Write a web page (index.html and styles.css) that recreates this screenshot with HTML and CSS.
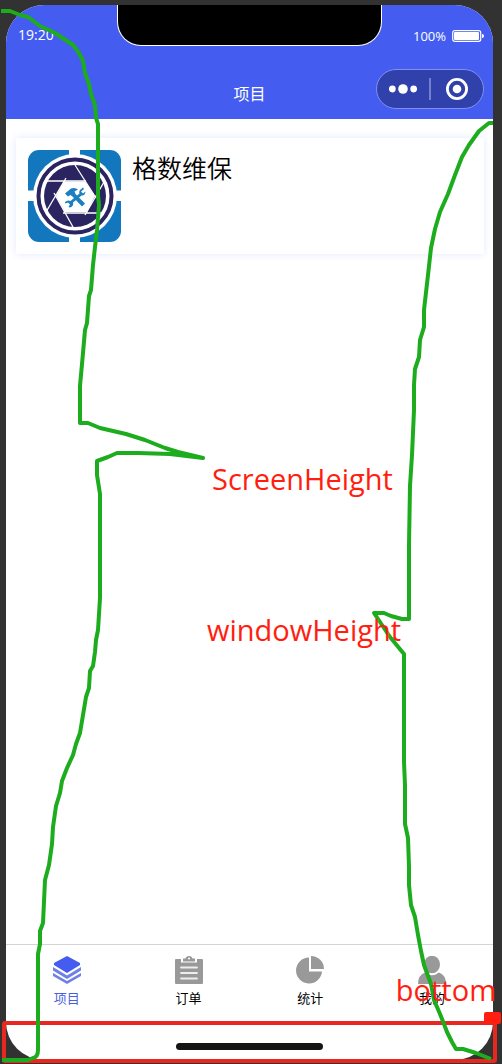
FILE: index.html
```html
<!DOCTYPE html>
<html lang="zh-CN">
<head>
<meta charset="utf-8">
<meta name="viewport" content="width=device-width, initial-scale=1">
<title>项目</title>
<link rel="stylesheet" href="styles.css">
</head>
<body>
<div class="phone">
  <header class="header">
    <div class="status">
      <span class="time">19:20</span>
      <div class="notch"></div>
      <div class="power">
        <span>100%</span>
        <svg class="battery" viewBox="0 0 32 12" aria-hidden="true"><rect x=".7" y=".7" width="28" height="10.6" rx="2" fill="none" stroke="#fff" stroke-width="1.2"/><rect x="2" y="2" width="25" height="8" rx="1" fill="#fff"/><path d="M30 4q2 0 2 2t-2 2z" fill="#fff"/></svg>
      </div>
    </div>
    <div class="nav">
      <h1 class="title">项目</h1>
      <div class="capsule">
        <button class="capsule-btn" aria-label="更多"><svg width="28" height="22" viewBox="0 0 28 22" fill="#fff"><circle cx="3.3" cy="11" r="3.4"/><circle cx="14" cy="11" r="4.8"/><circle cx="24.7" cy="11" r="3.4"/></svg></button>
        <button class="capsule-btn capsule-close" aria-label="关闭"><svg width="22" height="22" viewBox="0 0 22 22"><circle cx="11" cy="11" r="9.6" fill="none" stroke="#fff" stroke-width="2.8"/><circle cx="11" cy="11" r="4.3" fill="#fff"/></svg></button>
      </div>
    </div>
  </header>

  <main class="content">
    <article class="card">
      <svg class="logo" viewBox="0 0 93 92" aria-hidden="true">
        <rect width="93" height="92" rx="11" fill="#1277bc"/>
        <path d="M41 0h11v92H41zM0 40.500h93v10.500H0z" fill="#fff"/>
        <circle cx="47" cy="46" r="42" fill="#fff"/>
        <circle cx="47" cy="46" r="36.500" fill="none" stroke="#2a2460" stroke-width="4"/>
        <circle cx="47" cy="46" r="31" fill="#2a2460"/>
        <path d="M36 31.500H57L67 46 59 62H37L28 46z" fill="#fff"/>
        <path d="M19 31H58M47 15 68 48M76 32 57 65M75 63H35M45 77 26 43M18 62 38 28" fill="none" stroke="#fff" stroke-width="1.300"/>
        <path d="M37 43.500 43 38.500Q47 37 50 39.500L46.500 41.500 47.500 44 57 53.500 54 56.500 44.500 46.500 42.500 45 40 46.500z" fill="#1c7fc0"/>
        <path d="M55 37.500 52 40Q50.500 42 51.500 43.500L42.500 51Q39.500 49.500 37 52L37.500 53.500 40 52.500 42 54.500 40.500 57 42 57.500Q46 56 45 52.500L53.500 45.500Q57 46 57.500 41.500L55 43.500 53 41.500 56 39z" fill="#1c7fc0"/>
      </svg>
      <h2 class="card-title">格数维保</h2>
    </article>
  </main>

  <nav class="tabbar">
    <a class="tab active" href="#project">
      <svg class="tab-icon" viewBox="0 0 28 28"><path d="M14 0 27 7V9L14 17 1 9V7z" fill="#445df0"/><path d="M0 11 14 19.500 28 11V14.500L14 23 0 14.500zM0 17 14 25 28 17V20L14 28 0 20z" fill="#7080e4"/></svg>
      <span>项目</span>
    </a>
    <a class="tab" href="#orders">
      <svg class="tab-icon" viewBox="0 0 28 28"><path d="M1 3H6V6.500H22V3H27Q28 3 28 4V27Q28 28 27 28H1Q0 28 0 27V4Q0 3 1 3z" fill="#999"/><path d="M8 2.500H10.500Q11 0 14 0T17.500 2.500H20V5.500H8z" fill="#999"/><circle cx="14" cy="2.500" r="1" fill="#fff"/><path d="M6 11.500H22M6 17H22M6 22.500H22" stroke="#eee" stroke-width="1.800" stroke-linecap="round"/></svg>
      <span>订单</span>
    </a>
    <a class="tab" href="#stats">
      <svg class="tab-icon" viewBox="0 0 28 28" fill="#999"><path d="M13 1.500V15.500H26A13 13 0 1 1 13 1.500z"/><path d="M15 0A13 13 0 0 1 28 13H15z"/></svg>
      <span>统计</span>
    </a>
    <a class="tab" href="#me">
      <svg class="tab-icon" viewBox="0 0 28 28" fill="#999"><ellipse cx="14" cy="8.500" rx="8" ry="8.700"/><path d="M0 28Q0 19 7 16.500Q14 22 21 16.500Q28 19 28 28z"/></svg>
      <span>我的</span>
    </a>
  </nav>
  <div class="home-area"><div class="home-bar"></div></div>
</div>

<div class="markup">
  <svg class="strokes" viewBox="0 0 502 1064" preserveAspectRatio="none" aria-hidden="true">
    <rect x="4" y="1023" width="491" height="38" rx="1" fill="none" stroke="#e8281e" stroke-width="4"/>
    <rect x="484" y="1012" width="17" height="12" rx="2" fill="#ff1e10"/>
    <g fill="none" stroke="#1dac1d" stroke-width="4" stroke-linejoin="round">
      <path d="M1 11H10L20 15 28 17 40 26 55 33 73 45 79 53 83 61 85 73 89 84 91 94 95 105 96 118 98 124V195L99 205 97 230 95 247 93 265 91 290 89 296 87 323 85 330 83 353 80 386V423H88L100 428 126 434 145 440 165 448 178 452 203 458 170 454 138 453H117L108 457 97 461V475L100 494V598L98 630 96 640 95 652 93 666 90 671 89 688 86 697 83 715 80 733 76 744 73 755 67 768 62 781 60 793 56 806 53 827 52 844 49 865 45 880 43 923 40 931V944L38 954V1050Q38 1057 33 1058L28 1060H2"/>
      <path d="M493 123H489L479 131 469 145 462 157 455 175 448 194 440 212 435 229 431 248 428 275 424 310V327L420 340 419 357 415 369 414 385V410L412 455 410 486 409 545V619H402L391 616 384 613H374L384 628 390 637 404 654V762L405 785V824L408 838 409 867V885L411 905 415 917 418 935 421 951 424 965 431 984 434 1000 440 1014 444 1024 447 1032 452 1042 456 1049H463L476 1053 491 1059"/>
    </g>
  </svg>
  <span class="note note-screen">ScreenHeight</span>
  <span class="note note-window">windowHeight</span>
  <span class="note note-bottom">bottom</span>
</div>
</body>
</html>
```
FILE: styles.css
```css
* { box-sizing: border-box; }

body {
  margin: 0;
  position: relative;
  min-height: 100vh;
  padding: 5px 9px 4px 6px;
  background: #323232;
  color: #000;
  font-family: "Open Sans", "Noto Sans CJK SC", sans-serif;
  overflow-x: hidden;
}

.phone {
  display: flex;
  flex-direction: column;
  min-height: calc(100vh - 9px);
  border-radius: 38px;
  background: #fff;
  overflow: hidden;
}

.header {
  background: #445df0;
  color: #fff;
}

.status {
  display: grid;
  grid-template-columns: 1fr 265px 1fr;
}

.time {
  padding: 20px 0 0 12px;
  font-size: 14px;
  line-height: 20px;
}

.notch {
  height: 41px;
  background: #000;
  border: 1px solid #fff;
  border-top: 0;
  border-radius: 0 0 24px 24px;
}

.power {
  display: flex;
  justify-content: flex-end;
  align-items: center;
  gap: 6px;
  padding: 21px 9px 0 0;
  font-size: 13px;
  line-height: 20px;
}

.battery {
  width: 32px;
  height: 12px;
}

.nav {
  display: grid;
  grid-template-columns: 1fr auto 1fr;
  align-items: start;
  padding: 23px 9px 10px;
}

.title {
  grid-column: 2;
  margin: 0;
  padding-top: 15px;
  font-size: 16px;
  font-weight: 400;
  line-height: 20px;
}

.capsule {
  justify-self: end;
  display: flex;
  align-items: center;
  width: 108px;
  height: 40px;
  border: 1px solid #8390ee;
  border-radius: 20px;
  background: #3141ac;
}

.capsule-btn {
  flex: 1;
  display: flex;
  align-items: center;
  justify-content: center;
  height: 22px;
  padding: 0;
  border: 0;
  background: none;
}

.capsule-close { border-left: 2px solid #7480cf; }

.content {
  flex: 1;
  padding: 19px 9px 0 10px;
}

.card {
  display: flex;
  gap: 11px;
  padding: 12px;
  background: #fff;
  box-shadow: 0 0 8px #e4e8fc;
}

.logo {
  width: 93px;
  height: 92px;
}

.card-title {
  margin: 0;
  font-family: "Noto Sans CJK SC", sans-serif;
  font-size: 25px;
  font-weight: 350;
  line-height: 34px;
}

.tabbar {
  display: flex;
  border-top: 1px solid #d4d4d4;
  padding: 11px 0 12px;
}

.tab {
  flex: 1;
  display: flex;
  flex-direction: column;
  align-items: center;
  gap: 4px;
  color: #000;
  font-size: 13px;
  line-height: 20px;
  text-decoration: none;
}

.tab.active { color: #4a5fdc; }

.tab-icon {
  width: 28px;
  height: 28px;
}

.home-area {
  display: flex;
  justify-content: center;
  padding: 23px 0 10px;
}

.home-bar {
  width: 147px;
  height: 7px;
  border-radius: 4px;
  background: #151515;
}

.markup {
  position: absolute;
  inset: 0;
  pointer-events: none;
}

.strokes {
  position: absolute;
  width: 100%;
  height: 100%;
}

.note {
  position: absolute;
  color: #ff1e10;
  font-size: 29px;
  line-height: 40px;
}

.note-screen { left: 212px; top: 459px; }
.note-window { left: 207px; top: 610px; }
.note-bottom { right: 6px; top: 970px; }
```
